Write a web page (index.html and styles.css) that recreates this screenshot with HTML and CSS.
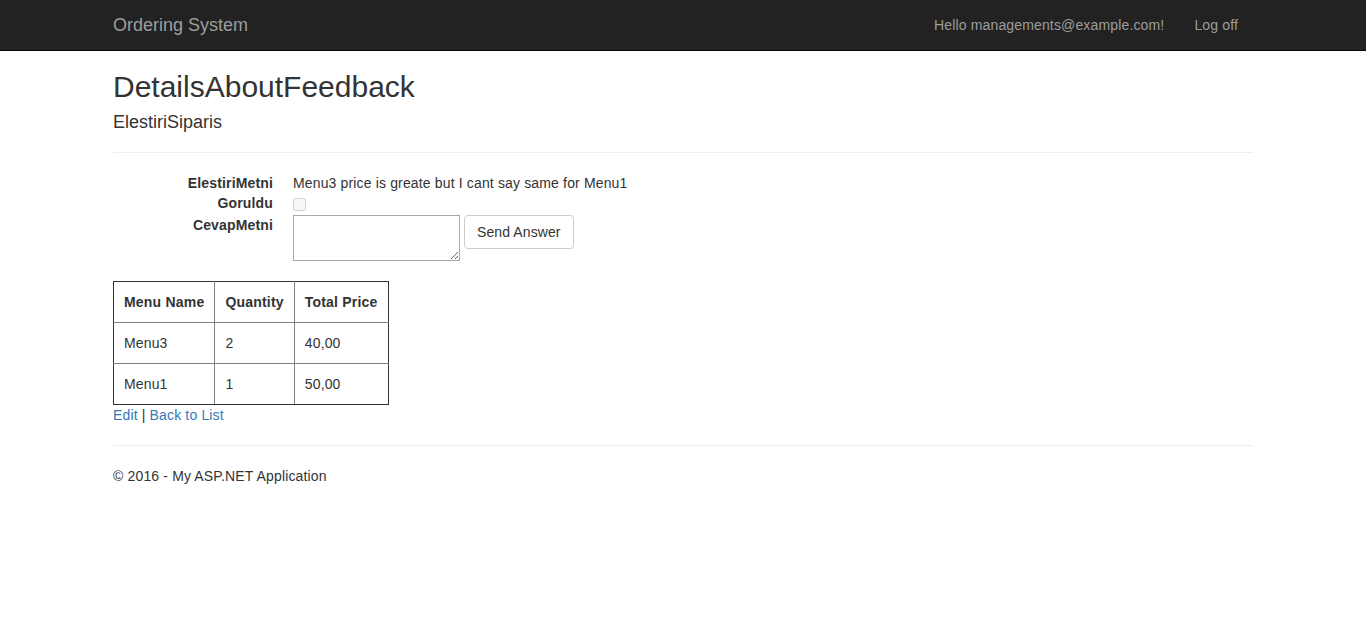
FILE: index.html
```html
<!DOCTYPE html>
<html>
<head>
<meta charset="utf-8">
<title>DetailsAboutFeedback</title>
<link rel="stylesheet" href="styles.css">
</head>
<body>
<nav class="navbar">
  <div class="container nav-inner">
    <a class="brand" href="#">Ordering System</a>
    <ul class="nav-right">
      <li><a href="#">Hello managements@example.com!</a></li>
      <li><a href="#">Log off</a></li>
    </ul>
  </div>
</nav>
<main class="container">
  <h2 class="title">DetailsAboutFeedback</h2>
  <h4 class="subtitle">ElestiriSiparis</h4>
  <hr class="rule rule-top">
  <dl class="details">
    <dt class="row1">ElestiriMetni</dt>
    <dd class="row1">Menu3 price is greate but I cant say same for Menu1</dd>
    <dt class="row2">Goruldu</dt>
    <dd class="row2"><input class="check" type="checkbox" disabled></dd>
    <dt class="row3">CevapMetni</dt>
    <dd class="row3 answer">
      <textarea class="answer-box"></textarea>
      <button class="btn" type="button">Send Answer</button>
    </dd>
  </dl>
  <table class="orders">
    <thead>
      <tr><th>Menu Name</th><th>Quantity</th><th>Total Price</th></tr>
    </thead>
    <tbody>
      <tr><td>Menu3</td><td>2</td><td>40,00</td></tr>
      <tr><td>Menu1</td><td>1</td><td>50,00</td></tr>
    </tbody>
  </table>
  <p class="links"><a href="#">Edit</a> | <a href="#">Back to List</a></p>
  <hr class="rule">
  <footer class="footer"><p>&copy; 2016 - My ASP.NET Application</p></footer>
</main>
</body>
</html>
```
FILE: styles.css
```css
* { box-sizing: border-box; }
html, body { margin: 0; padding: 0; }
body {
  font-family: "Liberation Sans", Arial, Helvetica, sans-serif;
  font-size: 14px;
  line-height: 20px;
  letter-spacing: 0.15px;
  color: #333;
  background: #fff;
}
a { color: #337ab7; text-decoration: none; }

.container {
  width: 1170px;
  margin: 0 auto;
  padding: 0 15px;
}

.navbar {
  background: #222;
  border-bottom: 1px solid #080808;
  height: 51px;
}
.nav-inner {
  display: flex;
  justify-content: space-between;
  align-items: flex-start;
}
.brand {
  display: block;
  padding: 15px;
  margin-left: -15px;
  font-size: 18px;
  line-height: 20px;
  letter-spacing: 0;
  color: #9d9d9d;
}
.nav-right {
  list-style: none;
  margin: 0;
  padding: 0;
  display: flex;
}
.nav-right a {
  display: block;
  padding: 15px;
  line-height: 20px;
  color: #9d9d9d;
}

.title {
  font-size: 30px;
  font-weight: 500;
  line-height: 33px;
  letter-spacing: 0;
  margin: 19px 0 10px;
}
.subtitle {
  font-size: 18px;
  font-weight: 500;
  line-height: 19.8px;
  letter-spacing: 0;
  margin: 10px 0 10px;
}
.rule {
  border: 0;
  border-top: 1px solid #eee;
  margin: 20px 0;
  height: 0;
}
.rule-top { margin-top: 19px; }

.details {
  display: grid;
  grid-template-columns: 160px 1fr;
  column-gap: 20px;
  margin: 0 0 20px;
}
.details dt {
  font-weight: bold;
  text-align: right;
  margin: 0;
}
.details dd { margin: 0; }
.row1 { height: 20px; }
.row2 { height: 22px; }
.row3 { height: 46px; }
.check {
  display: block;
  width: 13px;
  height: 13px;
  margin: 5px 0 0 0;
}
.answer {
  display: flex;
  align-items: flex-start;
  gap: 4px;
}
.answer-box {
  width: 167px;
  height: 46px;
  margin: 0;
  padding: 2px;
  border: 1px solid #a9a9a9;
  font-family: "Liberation Mono", monospace;
  font-size: 13px;
}
.btn {
  font-family: inherit;
  font-size: 14px;
  line-height: 20px;
  letter-spacing: 0.1px;
  padding: 6px 12px;
  color: #333;
  background: #fff;
  border: 1px solid #ccc;
  border-radius: 4px;
  margin: 0;
}

.orders {
  border-collapse: collapse;
  border-spacing: 0;
}
.orders th, .orders td {
  border: 1px solid #808080;
  padding: 10px;
  text-align: left;
  line-height: 20px;
}
.orders th { font-weight: bold; letter-spacing: 0.2px; }
.orders tr > :first-child { border-left-color: #333; }
.orders tr > :last-child { border-right-color: #333; }
.orders thead th { border-top-color: #333; }
.orders tbody tr:last-child td { border-bottom-color: #333; }

.links { margin: 0; }
.footer p { margin: 0 0 10px; }
```
